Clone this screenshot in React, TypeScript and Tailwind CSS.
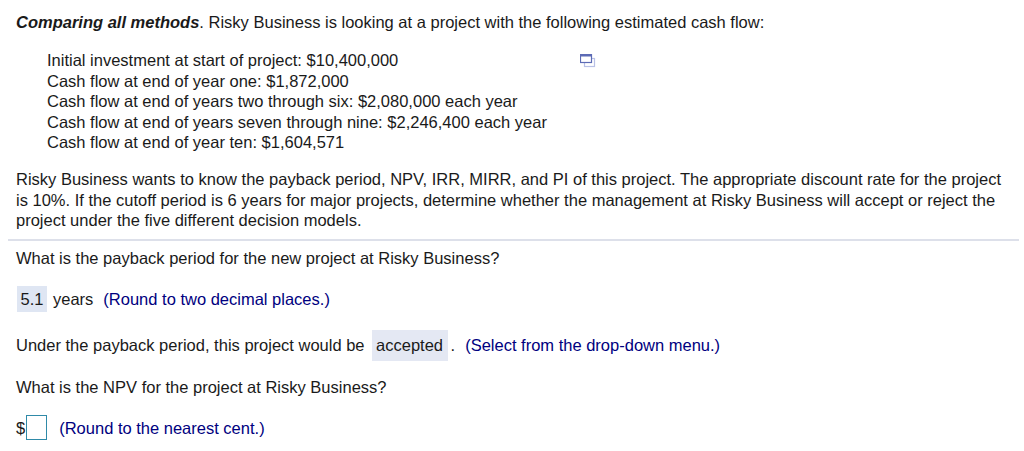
export default function App() {
  return (
    <div className="w-[1024px] h-[451px] overflow-hidden bg-white text-[#1a1a1a] text-[16.5px] leading-[20.4px] font-['Liberation_Sans',Arial,sans-serif]">
      <div className="pl-4 pt-[12px] pr-1">
        <p>
          <b><i>Comparing all methods</i></b>. Risky Business is looking at a project with the following estimated cash flow:
        </p>
        <div className="flex mt-[18px] pl-[31px]">
          <div className="w-[533px] shrink-0">
            <div>Initial investment at start of project: $10,400,000</div>
            <div>Cash flow at end of year one: $1,872,000</div>
            <div>Cash flow at end of years two through six: $2,080,000 each year</div>
            <div>Cash flow at end of years seven through nine: $2,246,400 each year</div>
            <div>Cash flow at end of year ten: $1,604,571</div>
          </div>
          <svg width="16" height="14" viewBox="0 0 16 14" className="mt-[4px]">
            <rect x="4.5" y="4.5" width="10" height="8" fill="#fff" stroke="#b9c1e6" strokeWidth="1.2" />
            <rect x="0.5" y="0.5" width="11" height="8" fill="#fff" stroke="#5c6bb5" strokeWidth="1.2" />
            <rect x="0.5" y="0.5" width="11" height="2" fill="#5c6bb5" />
          </svg>
        </div>
        <p className="mt-[17px] w-[1000px]">
          Risky Business wants to know the payback period, NPV, IRR, MIRR, and PI of this project. The appropriate discount rate for the project is 10%. If the cutoff period is 6 years for major projects, determine whether the management at Risky Business will accept or reject the project under the five different decision models.
        </p>
      </div>
      <div className="ml-[8px] mr-[5px] mt-[8px] h-[2px] bg-[#dde0ea]" />
      <div className="pl-4">
        <p className="mt-[7px]">What is the payback period for the new project at Risky Business?</p>
        <div className="mt-[18px] flex items-center h-[26px]">
          <span className="ml-[1px] h-[26px] w-[30px] flex items-center justify-center bg-[#dfe6f3]">5.1</span>
          <span className="ml-[6px]">years</span>
          <span className="ml-[10px] text-[#000080]">(Round to two decimal places.)</span>
        </div>
        <div className="mt-[18px] flex items-center h-[31px]">
          <span>Under the payback period, this project would be</span>
          <span className="ml-[7px] h-[31px] w-[76px] flex items-center justify-center bg-[#e4e8f3]">accepted</span>
          <span className="ml-[3px]">.</span>
          <span className="ml-[10px] text-[#000080]">(Select from the drop-down menu.)</span>
        </div>
        <p className="mt-[16px]">What is the NPV for the project at Risky Business?</p>
        <div className="mt-[18px] flex items-center h-[25px]">
          <span>$</span>
          <span className="ml-[1px] w-[21px] h-[25px] bg-white border border-[#2f8aa8]" />
          <span className="ml-[12px] text-[#000080]">(Round to the nearest cent.)</span>
        </div>
      </div>
    </div>
  );
}
